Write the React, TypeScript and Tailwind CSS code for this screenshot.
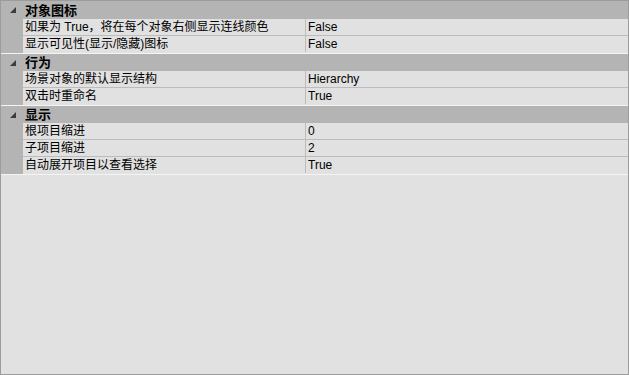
import React from "react";

type Row = { label: string; value: string };
type Section = { title: string; rows: Row[] };

const sections: Section[] = [
  {
    title: "对象图标",
    rows: [
      { label: "如果为 True，将在每个对象右侧显示连线颜色", value: "False" },
      { label: "显示可见性(显示/隐藏)图标", value: "False" },
    ],
  },
  {
    title: "行为",
    rows: [
      { label: "场景对象的默认显示结构", value: "Hierarchy" },
      { label: "双击时重命名", value: "True" },
    ],
  },
  {
    title: "显示",
    rows: [
      { label: "根项目缩进", value: "0" },
      { label: "子项目缩进", value: "2" },
      { label: "自动展开项目以查看选择", value: "True" },
    ],
  },
];

function Glyph() {
  return (
    <svg width="6" height="6" viewBox="0 0 6 6" className="block">
      <path d="M6 0 L6 6 L0 6 Z" fill="#3c3c3c" />
    </svg>
  );
}

export default function App() {
  return (
    <div
      className="w-[629px] h-[375px] border border-[#9c9c9c] bg-[#e1e1e1] text-[12px] text-black overflow-hidden"
      style={{ fontFamily: '"Liberation Sans", "Noto Sans CJK SC", sans-serif' }}
    >
      {sections.map((s, si) => (
        <div key={si} className="border-b border-[#f4f4f4]">
          <div className={`flex items-center bg-[#b4b4b4] ${si === 0 ? "h-[18px]" : "h-[17px]"}`}>
            <div className="w-[22px] flex justify-center pl-[2px]">
              <Glyph />
            </div>
            <span className="pl-[2px] font-bold text-[13px] leading-[17px]">{s.title}</span>
          </div>
          {s.rows.map((r, ri) => (
            <div key={ri} className="flex h-[17px]">
              <div className="w-[22px] bg-[#b4b4b4]" />
              <div
                className={`flex flex-1 ${ri < s.rows.length - 1 ? "border-b border-[#bcbcbc]" : "h-[16px]"}`}
              >
                <div className="w-[282px] pl-[2px] leading-[16px] truncate">{r.label}</div>
                <div className="flex-1 border-l border-[#bcbcbc] pl-[2px] leading-[16px]">{r.value}</div>
              </div>
            </div>
          ))}
        </div>
      ))}
    </div>
  );
}
